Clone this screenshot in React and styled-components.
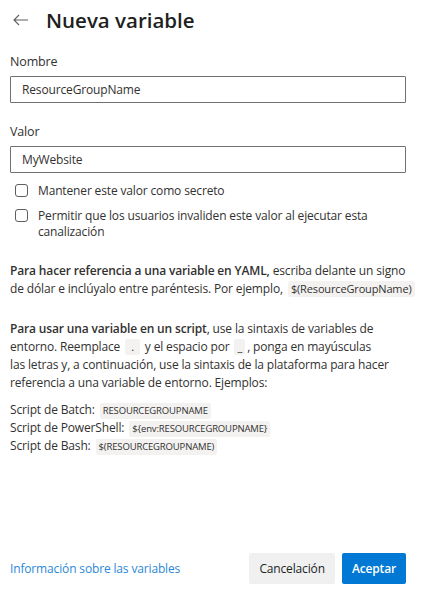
import React, { useState } from 'react'
import styled, { createGlobalStyle } from 'styled-components'

const Global = createGlobalStyle`
  html, body { margin: 0; padding: 0; background: #fff; }
  body {
    font-family: "Open Sans", "Noto Sans", sans-serif;
    color: #323130;
    letter-spacing: -0.15px;
    -webkit-font-smoothing: antialiased;
  }
  * { box-sizing: border-box; }
`

const App = () => {
  const [name, setName] = useState('ResourceGroupName')
  const [value, setValue] = useState('MyWebsite')

  return (
    <Panel>
      <Global />
      <Header>
        <BackBtn aria-label="Atrás">
          <svg width="16" height="12" viewBox="0 0 16 12" fill="none">
            <path d="M6 1 L1 6 L6 11 M1 6 H15" stroke="#605e5c" strokeWidth="1.1" />
          </svg>
        </BackBtn>
        <Title>Nueva variable</Title>
      </Header>

      <Body>
        <Field>
          <Label>Nombre</Label>
          <Input value={name} onChange={e => setName(e.target.value)} />
        </Field>
        <Field>
          <Label>Valor</Label>
          <Input value={value} onChange={e => setValue(e.target.value)} />
        </Field>

        <Checks>
          <Check>
            <Box type="checkbox" />
            <span>Mantener este valor como secreto</span>
          </Check>
          <Check>
            <Box type="checkbox" />
            <span>Permitir que los usuarios invaliden este valor al ejecutar esta canalización</span>
          </Check>
        </Checks>

        <Para>
          <b>Para hacer referencia a una variable en YAML,</b> escriba delante un signo de dólar e inclúyalo entre paréntesis. Por ejemplo, <Code>$(ResourceGroupName)</Code>
        </Para>

        <Para>
          <b>Para usar una variable en un script</b>, use la sintaxis de variables de entorno. Reemplace <Code $wide>.</Code> y el espacio por <Code>_</Code>, ponga en mayúsculas<br />las letras y, a continuación, use la sintaxis de la plataforma para hacer referencia a una variable de entorno. Ejemplos:
        </Para>

        <Examples>
          <div>Script de Batch: <Code $small>RESOURCEGROUPNAME</Code></div>
          <div>Script de PowerShell: <Code $small>${'{'}env:RESOURCEGROUPNAME{'}'}</Code></div>
          <div>Script de Bash: <Code $small>$(RESOURCEGROUPNAME)</Code></div>
        </Examples>
      </Body>

      <Footer>
        <Link href="#">Información sobre las variables</Link>
        <Buttons>
          <Button>Cancelación</Button>
          <Button $primary>Aceptar</Button>
        </Buttons>
      </Footer>
    </Panel>
  )
}

const Panel = styled.div`
  width: 422px;
  height: 592px;
  display: flex;
  flex-direction: column;
  font-size: 12px;
`

const Header = styled.div`
  display: flex;
  align-items: center;
  height: 40px;
  padding: 0 0 0 13px;
  gap: 17px;
`

const BackBtn = styled.button`
  border: none;
  background: none;
  padding: 0;
  display: flex;
  cursor: pointer;
`

const Title = styled.h1`
  margin: 0;
  font-size: 20.5px;
  font-weight: 600;
  letter-spacing: 0;
  color: #201f1e;
`

const Body = styled.div`
  flex: 1;
  padding: 13px 4px 0 10px;
  display: flex;
  flex-direction: column;
`

const Field = styled.div`
  display: flex;
  flex-direction: column;
  margin-bottom: 20px;
  padding-right: 12px;
  &:nth-child(2) { margin-bottom: 8px; }
`

const Label = styled.label`
  font-size: 12.5px;
  line-height: 18px;
  margin-bottom: 5px;
`

const Input = styled.input`
  height: 27px;
  width: 100%;
  border: 1px solid #707070;
  border-radius: 1px;
  padding: 0 11px;
  font-family: inherit;
  font-size: 12px;
  letter-spacing: -0.15px;
  color: #323130;
  outline: none;
`

const Checks = styled.div`
  display: flex;
  flex-direction: column;
  gap: 9px;
  padding: 2px 12px 0 5px;
`

const Check = styled.label`
  display: flex;
  align-items: flex-start;
  gap: 10px;
  line-height: 16px;
`

const Box = styled.input`
  appearance: none;
  margin: 1px 0 0;
  width: 13px;
  height: 13px;
  flex: none;
  border: 1px solid #605e5c;
  border-radius: 3px;
  background: #fff;
`

const Para = styled.p`
  margin: 22px 0 0;
  line-height: 18px;
  b { font-weight: 600; }
  & + & { margin-top: 22px; }
`

const Code = styled.code`
  display: inline-block;
  vertical-align: 0;
  background: #f3f2f1;
  border-radius: 2px;
  font-family: inherit;
  font-size: ${p => (p.$small ? '9.5px' : '11px')};
  line-height: 14px;
  padding: 1px ${p => (p.$wide ? '6px' : '3px')};
  margin: 0 2px;
`

const Examples = styled.div`
  margin-top: 9px;
  line-height: 18px;
`

const Footer = styled.div`
  display: flex;
  align-items: center;
  justify-content: space-between;
  padding: 0 16px 8px 10px;
`

const Link = styled.a`
  color: #2b88d8;
  text-decoration: none;
  font-size: 12px;
`

const Buttons = styled.div`
  display: flex;
  gap: 7px;
`

const Button = styled.button`
  height: 31px;
  padding: 0 10px;
  border: none;
  border-radius: 2px;
  font-family: inherit;
  font-size: 12px;
  letter-spacing: -0.15px;
  font-weight: ${p => (p.$primary ? 600 : 400)};
  background: ${p => (p.$primary ? '#0078d4' : '#f0f0f0')};
  color: ${p => (p.$primary ? '#fff' : '#201f1e')};
  cursor: pointer;
`

export default App
